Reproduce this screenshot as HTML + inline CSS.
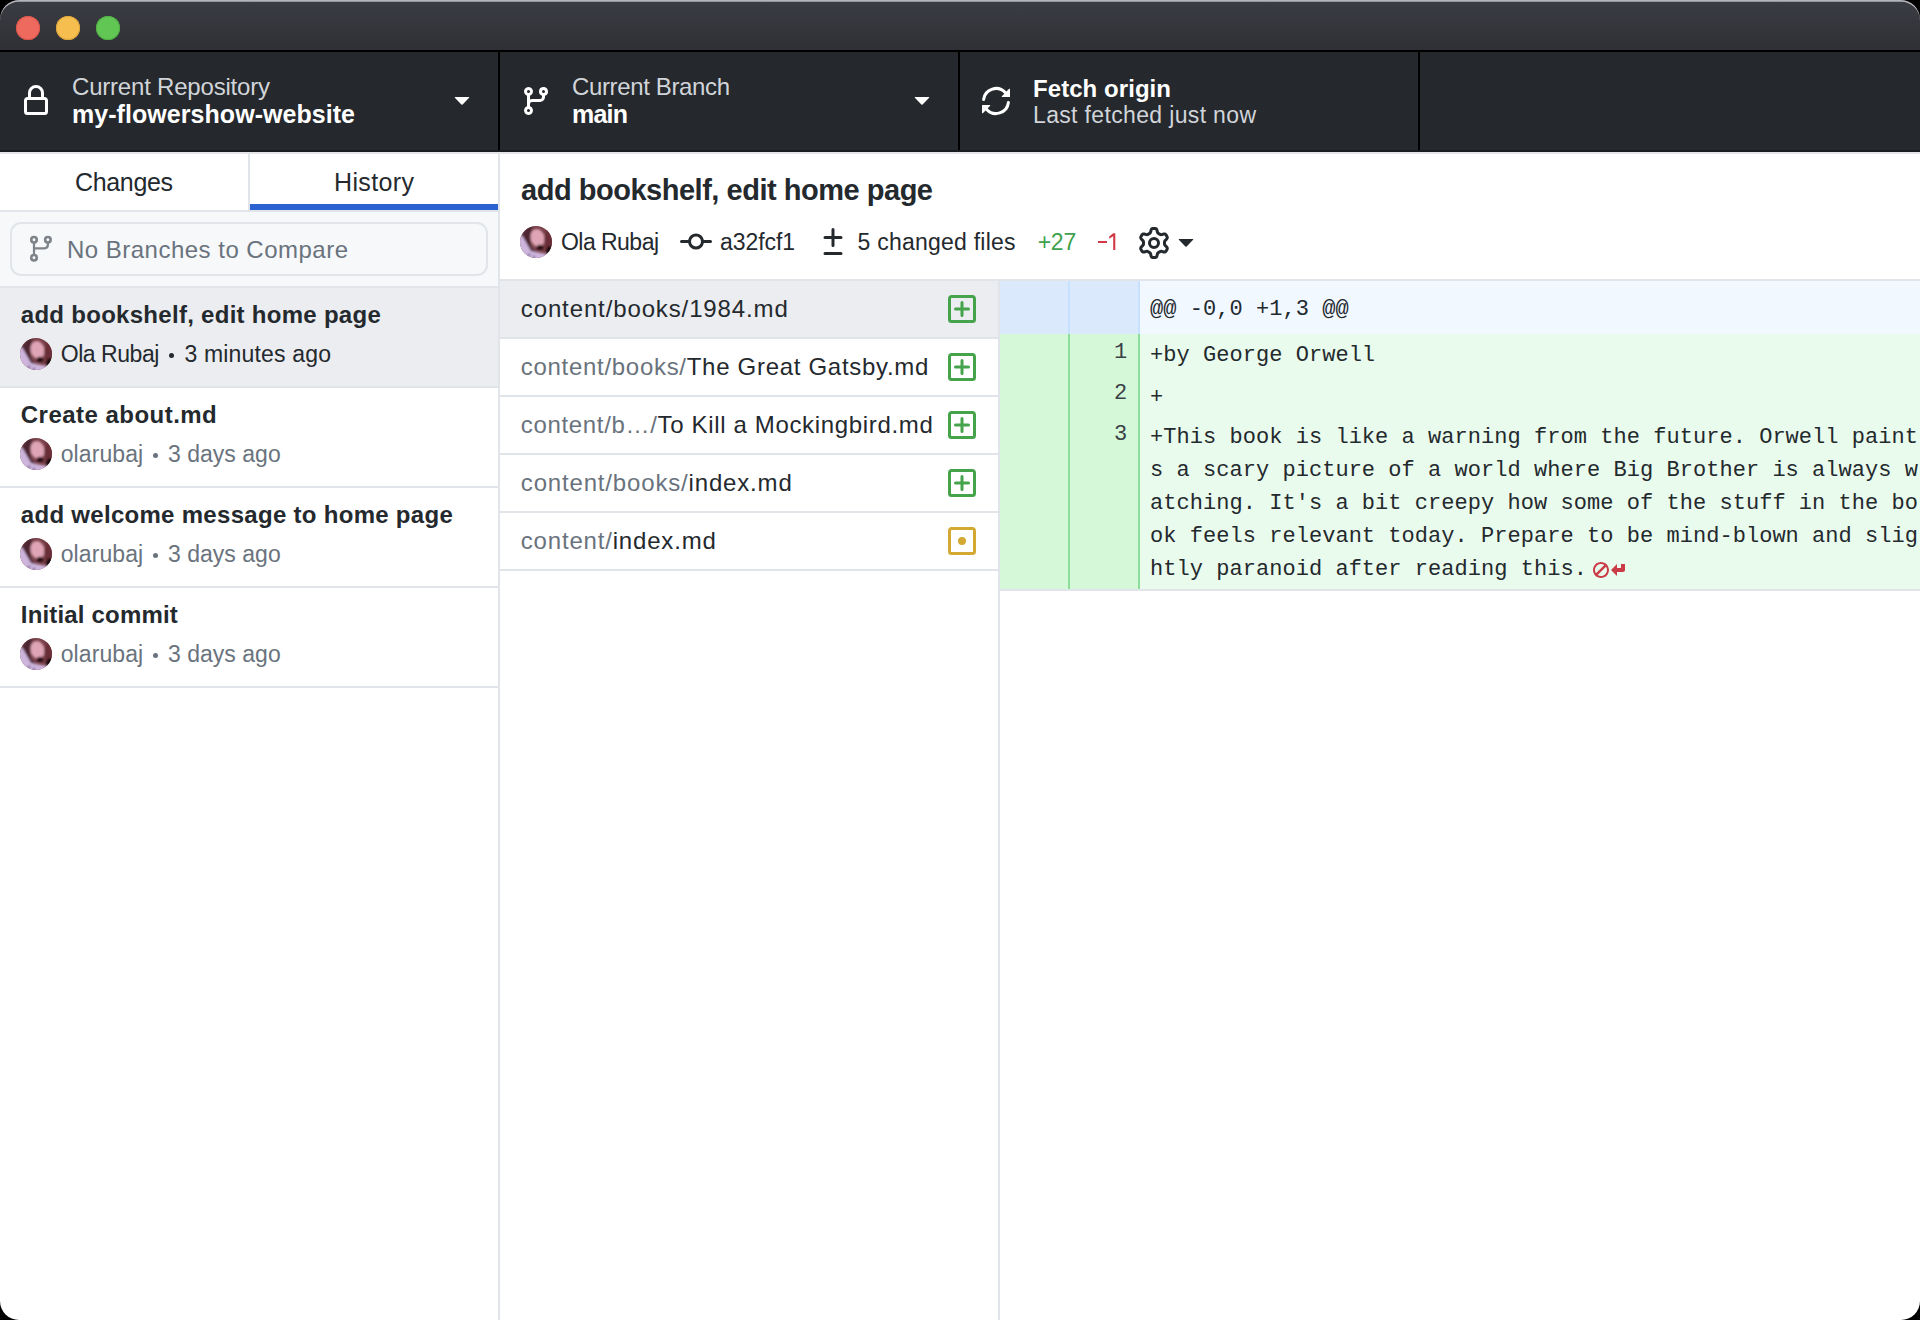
<!DOCTYPE html>
<html><head><meta charset="utf-8"><style>
html,body{margin:0;padding:0;width:1920px;height:1320px;overflow:hidden;background:#000;}
#win{position:absolute;left:0;top:0;width:1920px;height:1320px;border-radius:19px;overflow:hidden;}
.t{position:absolute;white-space:pre;line-height:1;font-family:"Liberation Sans",sans-serif;}
.m{position:absolute;white-space:pre;line-height:1;font-family:"Liberation Mono",monospace;letter-spacing:0.04px;}
.r{position:absolute;box-sizing:border-box;}
svg.r{overflow:visible;}
.av{position:absolute;border-radius:50%;background:
 radial-gradient(circle at 45% 40%, #e7b8c6 0, #cf8fa5 22%, rgba(160,80,100,0) 45%),
 radial-gradient(circle at 85% 75%, #1e0f12 0, #3b1c22 25%, rgba(60,28,34,0) 50%),
 radial-gradient(circle at 20% 85%, #d8c4e6 0, #c2a8d6 30%, rgba(194,168,214,0) 55%),
 radial-gradient(circle at 15% 25%, #5a2d38 0, rgba(90,45,56,0) 45%),
 #8e5565;}
</style></head><body>
<svg width="0" height="0" style="position:absolute"><defs>
<clipPath id="avc"><circle cx="16" cy="16" r="16"/></clipPath>
<filter id="avb" x="-20%" y="-20%" width="140%" height="140%"><feGaussianBlur stdDeviation="1"/></filter>
<symbol id="avsym" viewBox="0 0 32 32"><g clip-path="url(#avc)"><rect width="32" height="32" fill="#7a4048"/><g filter="url(#avb)">
<polygon points="-2,9 3,10 16,26 27,28 34,34 -2,34" fill="#cdb5dd"/>
<polygon points="2,9 7,1 13,1 11,10 11,20 16,26 11,25" fill="#4e2632"/>
<ellipse cx="17.5" cy="12" rx="7" ry="9" transform="rotate(-15 17.5 12)" fill="#dfa5b6"/>
<ellipse cx="28.5" cy="14" rx="4.5" ry="11" fill="#6b2f38"/>
<ellipse cx="20" cy="21.5" rx="3.5" ry="2.8" fill="#2a0e12"/>
<ellipse cx="30" cy="26" rx="4" ry="6" fill="#140808"/>
<circle cx="9" cy="29" r="1.3" fill="#5a4a80"/><circle cx="14" cy="31" r="1.2" fill="#5a4a80"/>
</g></g></symbol></defs></svg>
<div id="win">
<div class="r" style="left:0px;top:0px;width:1920px;height:50px;background:linear-gradient(#3b3d44,#2e3035);"></div>
<div class="r" style="left:0px;top:50px;width:1920px;height:2px;background:#000;"></div>
<div class="r" style="left:0;top:0;width:1920px;height:40px;border-radius:19px 19px 0 0;box-shadow:inset 0 1.8px 0 #b4b5ba;"></div>
<div class="r" style="left:16px;top:16px;width:24px;height:24px;border-radius:50%;background:#ee6a5f;box-shadow:inset 0 0 0 1px #d9544a;"></div>
<div class="r" style="left:56px;top:16px;width:24px;height:24px;border-radius:50%;background:#f5be4f;box-shadow:inset 0 0 0 1px #dba53a;"></div>
<div class="r" style="left:96px;top:16px;width:24px;height:24px;border-radius:50%;background:#62c655;box-shadow:inset 0 0 0 1px #52ad45;"></div>
<div class="r" style="left:0px;top:52px;width:1920px;height:98px;background:#25282c;"></div>
<div class="r" style="left:0px;top:150px;width:1920px;height:2px;background:#1a1c20;"></div>
<div class="r" style="left:0px;top:152px;width:1920px;height:2px;background:#e4e5e9;"></div>
<div class="r" style="left:498px;top:52px;width:2px;height:98px;background:#000;"></div>
<div class="r" style="left:958px;top:52px;width:2px;height:98px;background:#000;"></div>
<div class="r" style="left:1418px;top:52px;width:2px;height:98px;background:#000;"></div>
<div class="r" style="left:0px;top:154px;width:1920px;height:1166px;background:#fff;"></div>
<div class="r" style="left:248px;top:154px;width:2px;height:56px;background:#e1e4e8;"></div>
<div class="r" style="left:250px;top:204px;width:248px;height:6px;background:#2a63d1;"></div>
<div class="r" style="left:0px;top:210px;width:498px;height:2px;background:#e1e4e8;"></div>
<div class="r" style="left:0px;top:212px;width:498px;height:74px;background:#f6f8fa;"></div>
<div class="r" style="left:10px;top:222px;width:478px;height:54px;border:2px solid #e1e4e8;border-radius:11px;background:#f6f8fa;"></div>
<div class="r" style="left:0px;top:286px;width:498px;height:2px;background:#e1e4e8;"></div>
<div class="r" style="left:0px;top:288px;width:498px;height:98px;background:#ebedf0;"></div>
<div class="r" style="left:0px;top:386px;width:498px;height:2px;background:#e1e4e8;"></div>
<div class="r" style="left:0px;top:486px;width:498px;height:2px;background:#e1e4e8;"></div>
<div class="r" style="left:0px;top:586px;width:498px;height:2px;background:#e1e4e8;"></div>
<div class="r" style="left:0px;top:686px;width:498px;height:2px;background:#e1e4e8;"></div>
<div class="r" style="left:498px;top:154px;width:2px;height:1166px;background:#e1e4e8;"></div>
<div class="r" style="left:500px;top:279px;width:1420px;height:2px;background:#e1e4e8;"></div>
<div class="r" style="left:500px;top:281px;width:498px;height:56px;background:#ebedf0;"></div>
<div class="r" style="left:500px;top:337px;width:498px;height:2px;background:#e1e4e8;"></div>
<div class="r" style="left:500px;top:395px;width:498px;height:2px;background:#e1e4e8;"></div>
<div class="r" style="left:500px;top:453px;width:498px;height:2px;background:#e1e4e8;"></div>
<div class="r" style="left:500px;top:511px;width:498px;height:2px;background:#e1e4e8;"></div>
<div class="r" style="left:500px;top:569px;width:498px;height:2px;background:#e1e4e8;"></div>
<div class="r" style="left:998px;top:281px;width:2px;height:1039px;background:#e1e4e8;"></div>
<div class="r" style="left:1000px;top:281px;width:138px;height:53px;background:#dbe9fc;"></div>
<div class="r" style="left:1140px;top:281px;width:780px;height:53px;background:#f1f8ff;"></div>
<div class="r" style="left:1068px;top:281px;width:2px;height:53px;background:#c8e1ff;"></div>
<div class="r" style="left:1138px;top:281px;width:2px;height:53px;background:#c8e1ff;"></div>
<div class="r" style="left:1000px;top:334px;width:138px;height:255px;background:#d5f9d8;"></div>
<div class="r" style="left:1140px;top:334px;width:780px;height:255px;background:#e9fbec;"></div>
<div class="r" style="left:1068px;top:334px;width:2px;height:255px;background:#8fdd9c;"></div>
<div class="r" style="left:1138px;top:334px;width:2px;height:255px;background:#8fdd9c;"></div>
<div class="r" style="left:1000px;top:589px;width:920px;height:2px;background:#e1e4e8;"></div>
<svg class="r" style="left:20px;top:85px;" width="32" height="32" viewBox="0 0 16 16"><path fill="#fff" d="M4 4a4 4 0 0 1 8 0v2h.25c.966 0 1.75.784 1.75 1.75v5.5A1.75 1.75 0 0 1 12.25 15h-8.5A1.75 1.75 0 0 1 2 13.25v-5.5C2 6.784 2.784 6 3.75 6H4Zm8.25 3.5h-8.5a.25.25 0 0 0-.25.25v5.5c0 .138.112.25.25.25h8.5a.25.25 0 0 0 .25-.25v-5.5a.25.25 0 0 0-.25-.25ZM10.5 6V4a2.5 2.5 0 1 0-5 0v2Z"/></svg>
<svg class="r" style="left:446px;top:82.7px;" width="32" height="32" viewBox="0 0 16 16"><path fill="#fff" d="M4.427 7.427l3.396 3.396a.25.25 0 00.354 0l3.396-3.396A.25.25 0 0011.396 7H4.604a.25.25 0 00-.177.427z"/></svg>
<svg class="r" style="left:520px;top:85px;" width="32" height="32" viewBox="0 0 16 16"><path fill="#fff" d="M9.5 3.25a2.25 2.25 0 1 1 3 2.122V6A2.5 2.5 0 0 1 10 8.5H6a1 1 0 0 0-1 1v1.128a2.251 2.251 0 1 1-1.5 0V5.372a2.25 2.25 0 1 1 1.5 0v1.836A2.493 2.493 0 0 1 6 7h4a1 1 0 0 0 1-1v-.628A2.25 2.25 0 0 1 9.5 3.25Zm-6 0a.75.75 0 1 0 1.5 0 .75.75 0 0 0-1.5 0Zm8.25-.75a.75.75 0 1 0 0 1.5.75.75 0 0 0 0-1.5ZM4.25 12a.75.75 0 1 0 0 1.5.75.75 0 0 0 0-1.5Z"/></svg>
<svg class="r" style="left:906px;top:82.7px;" width="32" height="32" viewBox="0 0 16 16"><path fill="#fff" d="M4.427 7.427l3.396 3.396a.25.25 0 00.354 0l3.396-3.396A.25.25 0 0011.396 7H4.604a.25.25 0 00-.177.427z"/></svg>
<svg class="r" style="left:980px;top:85px;transform:scaleX(-1);" width="32" height="32" viewBox="0 0 16 16"><path fill="#fff" d="M1.705 8.005a.75.75 0 0 1 .834.656 5.5 5.5 0 0 0 9.592 2.97l-1.204-1.204a.25.25 0 0 1 .177-.427h3.646a.25.25 0 0 1 .25.25v3.646a.25.25 0 0 1-.427.177l-1.38-1.38A7.002 7.002 0 0 1 1.05 8.84a.75.75 0 0 1 .656-.834ZM8 2.5a5.487 5.487 0 0 0-4.131 1.869l1.204 1.204A.25.25 0 0 1 4.896 6H1.25A.25.25 0 0 1 1 5.75V2.104a.25.25 0 0 1 .427-.177l1.38 1.38A7.002 7.002 0 0 1 14.95 7.16a.75.75 0 0 1-1.49.178A5.5 5.5 0 0 0 8 2.5Z"/></svg>
<svg class="r" style="left:0;top:0" width="80" height="300" viewBox="0 0 80 300"><g fill="none" stroke="#7e8389" stroke-width="2.2"><g stroke-width="2.6"><circle cx="34" cy="239.8" r="2.75"/><circle cx="47.9" cy="239.8" r="2.75"/><circle cx="34" cy="257.7" r="2.75"/></g><path d="M34 242.8V254.7M47.9 242.8V244.8Q47.9 248.3 44.4 248.3H34"/></g></svg>
<svg class="r" style="left:680px;top:226px;" width="32" height="32" viewBox="0 0 16 16"><path fill="#24292e" d="M11.93 8.5a4.002 4.002 0 0 1-7.86 0H.75a.75.75 0 0 1 0-1.5h3.32a4.002 4.002 0 0 1 7.86 0h3.32a.75.75 0 0 1 0 1.5Zm-1.43-.75a2.5 2.5 0 1 0-5 0 2.5 2.5 0 0 0 5 0Z"/></svg>
<svg class="r" style="left:817px;top:226px;" width="32" height="32" viewBox="0 0 16 16"><path fill="#24292e" d="M8.75 1.75V5H12a.75.75 0 0 1 0 1.5H8.75v3.25a.75.75 0 0 1-1.5 0V6.5H4A.75.75 0 0 1 4 5h3.25V1.75a.75.75 0 0 1 1.5 0ZM4 13h8a.75.75 0 0 1 0 1.5H4A.75.75 0 0 1 4 13Z"/></svg>
<svg class="r" style="left:1138px;top:227px;" width="32" height="32" viewBox="0 0 16 16"><path fill="#24292e" d="M8 0a8.2 8.2 0 0 1 .701.031C9.444.095 9.99.645 10.16 1.29l.288 1.107c.018.066.079.158.212.224.231.114.454.243.668.386.123.082.233.09.299.071l1.103-.303c.644-.176 1.392.021 1.82.63.27.385.506.792.704 1.218.315.675.111 1.422-.364 1.891l-.814.806c-.049.048-.098.147-.088.294.016.257.016.515 0 .772-.01.147.038.246.088.294l.814.806c.475.469.679 1.216.364 1.891a7.977 7.977 0 0 1-.704 1.217c-.428.61-1.176.807-1.82.63l-1.102-.302c-.067-.019-.177-.011-.3.071a5.909 5.909 0 0 1-.668.386c-.133.066-.194.158-.211.224l-.29 1.106c-.168.646-.715 1.196-1.458 1.26a8.006 8.006 0 0 1-1.402 0c-.743-.064-1.289-.614-1.458-1.26l-.289-1.106c-.018-.066-.079-.158-.212-.224a5.738 5.738 0 0 1-.668-.386c-.123-.082-.233-.09-.299-.071l-1.103.303c-.644.176-1.392-.021-1.82-.63a8.12 8.12 0 0 1-.704-1.218c-.315-.675-.111-1.422.363-1.891l.815-.806c.05-.048.098-.147.088-.294a6.214 6.214 0 0 1 0-.772c.01-.147-.038-.246-.088-.294l-.815-.806C.635 6.045.431 5.298.746 4.623a7.92 7.92 0 0 1 .704-1.217c.428-.61 1.176-.807 1.82-.63l1.102.302c.067.019.177.011.3-.071.214-.143.437-.272.668-.386.133-.066.194-.158.211-.224l.29-1.106C6.009.645 6.556.095 7.299.03 7.53.01 7.764 0 8 0Zm-.571 1.525c-.036.003-.108.036-.137.146l-.289 1.105c-.147.561-.549.967-.998 1.189-.173.086-.34.183-.5.29-.417.278-.97.423-1.529.27l-1.103-.303c-.109-.03-.175.016-.195.045-.22.312-.412.644-.573.99-.014.031-.021.11.059.19l.815.806c.411.406.562.957.53 1.456a4.709 4.709 0 0 0 0 .582c.032.499-.119 1.05-.53 1.456l-.815.806c-.081.08-.073.159-.059.19.162.346.353.677.573.989.02.03.085.076.195.046l1.102-.303c.56-.153 1.113-.008 1.53.27.161.107.328.204.501.29.447.222.85.629.997 1.189l.289 1.105c.029.109.101.143.137.146a6.6 6.6 0 0 0 1.142 0c.036-.003.108-.036.137-.146l.289-1.105c.147-.561.549-.967.998-1.189.173-.086.34-.183.5-.29.417-.278.97-.423 1.529-.27l1.103.303c.109.029.175-.016.195-.045.22-.313.411-.644.573-.99.014-.031.021-.11-.059-.19l-.815-.806c-.411-.406-.562-.957-.53-1.456a4.709 4.709 0 0 0 0-.582c-.032-.499.119-1.05.53-1.456l.815-.806c.081-.08.073-.159.059-.19a6.464 6.464 0 0 0-.573-.989c-.02-.03-.085-.076-.195-.046l-1.102.303c-.56.153-1.113.008-1.53-.27a4.44 4.44 0 0 0-.501-.29c-.447-.222-.85-.629-.997-1.189l-.289-1.105c-.029-.11-.101-.143-.137-.146a6.6 6.6 0 0 0-1.142 0ZM11 8a3 3 0 1 1-6 0 3 3 0 0 1 6 0ZM9.5 8a1.5 1.5 0 1 0-3.001.001A1.5 1.5 0 0 0 9.5 8Z"/></svg>
<svg class="r" style="left:1170px;top:225px;" width="32" height="32" viewBox="0 0 16 16"><path fill="#24292e" d="M4.427 7.427l3.396 3.396a.25.25 0 00.354 0l3.396-3.396A.25.25 0 0011.396 7H4.604a.25.25 0 00-.177.427z"/></svg>
<svg class="r" style="left:946px;top:293px;" width="32" height="32" viewBox="0 0 16 16"><path fill="#45a44b" d="M2.75 1h10.5c.966 0 1.75.784 1.75 1.75v10.5A1.75 1.75 0 0 1 13.25 15H2.75A1.75 1.75 0 0 1 1 13.25V2.75C1 1.784 1.784 1 2.75 1Zm10.5 1.5H2.75a.25.25 0 0 0-.25.25v10.5c0 .138.112.25.25.25h10.5a.25.25 0 0 0 .25-.25V2.75a.25.25 0 0 0-.25-.25ZM8 4a.75.75 0 0 1 .75.75v2.5h2.5a.75.75 0 0 1 0 1.5h-2.5v2.5a.75.75 0 0 1-1.5 0v-2.5h-2.5a.75.75 0 0 1 0-1.5h2.5v-2.5A.75.75 0 0 1 8 4Z"/></svg>
<svg class="r" style="left:946px;top:351px;" width="32" height="32" viewBox="0 0 16 16"><path fill="#45a44b" d="M2.75 1h10.5c.966 0 1.75.784 1.75 1.75v10.5A1.75 1.75 0 0 1 13.25 15H2.75A1.75 1.75 0 0 1 1 13.25V2.75C1 1.784 1.784 1 2.75 1Zm10.5 1.5H2.75a.25.25 0 0 0-.25.25v10.5c0 .138.112.25.25.25h10.5a.25.25 0 0 0 .25-.25V2.75a.25.25 0 0 0-.25-.25ZM8 4a.75.75 0 0 1 .75.75v2.5h2.5a.75.75 0 0 1 0 1.5h-2.5v2.5a.75.75 0 0 1-1.5 0v-2.5h-2.5a.75.75 0 0 1 0-1.5h2.5v-2.5A.75.75 0 0 1 8 4Z"/></svg>
<svg class="r" style="left:946px;top:409px;" width="32" height="32" viewBox="0 0 16 16"><path fill="#45a44b" d="M2.75 1h10.5c.966 0 1.75.784 1.75 1.75v10.5A1.75 1.75 0 0 1 13.25 15H2.75A1.75 1.75 0 0 1 1 13.25V2.75C1 1.784 1.784 1 2.75 1Zm10.5 1.5H2.75a.25.25 0 0 0-.25.25v10.5c0 .138.112.25.25.25h10.5a.25.25 0 0 0 .25-.25V2.75a.25.25 0 0 0-.25-.25ZM8 4a.75.75 0 0 1 .75.75v2.5h2.5a.75.75 0 0 1 0 1.5h-2.5v2.5a.75.75 0 0 1-1.5 0v-2.5h-2.5a.75.75 0 0 1 0-1.5h2.5v-2.5A.75.75 0 0 1 8 4Z"/></svg>
<svg class="r" style="left:946px;top:467px;" width="32" height="32" viewBox="0 0 16 16"><path fill="#45a44b" d="M2.75 1h10.5c.966 0 1.75.784 1.75 1.75v10.5A1.75 1.75 0 0 1 13.25 15H2.75A1.75 1.75 0 0 1 1 13.25V2.75C1 1.784 1.784 1 2.75 1Zm10.5 1.5H2.75a.25.25 0 0 0-.25.25v10.5c0 .138.112.25.25.25h10.5a.25.25 0 0 0 .25-.25V2.75a.25.25 0 0 0-.25-.25ZM8 4a.75.75 0 0 1 .75.75v2.5h2.5a.75.75 0 0 1 0 1.5h-2.5v2.5a.75.75 0 0 1-1.5 0v-2.5h-2.5a.75.75 0 0 1 0-1.5h2.5v-2.5A.75.75 0 0 1 8 4Z"/></svg>
<svg class="r" style="left:946px;top:525px;" width="32" height="32" viewBox="0 0 16 16"><path fill="#d3a833" d="M13.25 1c.966 0 1.75.784 1.75 1.75v10.5A1.75 1.75 0 0 1 13.25 15H2.75A1.75 1.75 0 0 1 1 13.25V2.75C1 1.784 1.784 1 2.75 1ZM2.75 2.5a.25.25 0 0 0-.25.25v10.5c0 .138.112.25.25.25h10.5a.25.25 0 0 0 .25-.25V2.75a.25.25 0 0 0-.25-.25ZM8 10a2 2 0 1 1 0-4 2 2 0 0 1 0 4Z"/></svg>
<svg class="r" style="left:1593px;top:554px;" width="32" height="32" viewBox="0 0 16 16"><path fill="#cb3a47" d="M16 5v3c0 .55-.45 1-1 1h-3v2L9 8l3-3v2h2V5h2zM8 8c0 2.2-1.8 4-4 4s-4-1.8-4-4 1.8-4 4-4 4 1.8 4 4zM1.5 9.66L5.66 5.5C5.18 5.19 4.61 5 4 5 2.34 5 1 6.34 1 8c0 .61.19 1.17.5 1.66zM7 8c0-.61-.19-1.17-.5-1.66L2.34 10.5c.48.31 1.05.5 1.66.5 1.66 0 3-1.34 3-3z"/></svg>
<svg class="r" style="left:20.0px;top:338.0px;" width="32" height="32" viewBox="0 0 32 32"><use href="#avsym"/></svg>
<svg class="r" style="left:20.0px;top:438.0px;" width="32" height="32" viewBox="0 0 32 32"><use href="#avsym"/></svg>
<svg class="r" style="left:20.0px;top:538.0px;" width="32" height="32" viewBox="0 0 32 32"><use href="#avsym"/></svg>
<svg class="r" style="left:20.0px;top:638.0px;" width="32" height="32" viewBox="0 0 32 32"><use href="#avsym"/></svg>
<svg class="r" style="left:520.0px;top:226.0px;" width="32" height="32" viewBox="0 0 32 32"><use href="#avsym"/></svg>
<div class="t" style="left:72.00px;top:74.68px;font-size:24px;color:#d1d5da;letter-spacing:-0.201px;">Current Repository</div>
<div class="t" style="left:72.00px;top:101.83px;font-size:25px;color:#ffffff;font-weight:700;letter-spacing:0.051px;">my-flowershow-website</div>
<div class="t" style="left:572.00px;top:74.68px;font-size:24px;color:#d1d5da;letter-spacing:-0.365px;">Current Branch</div>
<div class="t" style="left:572.00px;top:101.83px;font-size:25px;color:#ffffff;font-weight:700;letter-spacing:-0.783px;">main</div>
<div class="t" style="left:1033.00px;top:76.88px;font-size:24px;color:#ffffff;font-weight:700;letter-spacing:0.060px;">Fetch origin</div>
<div class="t" style="left:1033.00px;top:103.53px;font-size:23px;color:#d1d5da;letter-spacing:0.346px;">Last fetched just now</div>
<div class="t" style="left:75.00px;top:169.83px;font-size:25px;color:#24292e;letter-spacing:-0.345px;">Changes</div>
<div class="t" style="left:334.00px;top:169.83px;font-size:25px;color:#24292e;letter-spacing:0.370px;">History</div>
<div class="t" style="left:67.00px;top:238.48px;font-size:24px;color:#6a737d;letter-spacing:0.485px;">No Branches to Compare</div>
<div class="t" style="left:20.80px;top:302.68px;font-size:24px;color:#24292e;font-weight:700;letter-spacing:0.283px;">add bookshelf, edit home page</div>
<div class="t" style="left:60.70px;top:342.53px;font-size:23px;color:#24292e;letter-spacing:-0.447px;">Ola Rubaj</div>
<div class="r" style="left:169.3px;top:353px;width:5px;height:5px;border-radius:50%;background:#24292e;"></div>
<div class="t" style="left:184.40px;top:342.53px;font-size:23px;color:#24292e;letter-spacing:0.176px;">3 minutes ago</div>
<div class="t" style="left:20.80px;top:402.68px;font-size:24px;color:#24292e;font-weight:700;letter-spacing:0.473px;">Create about.md</div>
<div class="t" style="left:60.70px;top:442.53px;font-size:23px;color:#6a737d;letter-spacing:0.094px;">olarubaj</div>
<div class="r" style="left:153px;top:453px;width:5px;height:5px;border-radius:50%;background:#6a737d;"></div>
<div class="t" style="left:168.00px;top:442.53px;font-size:23px;color:#6a737d;letter-spacing:0.018px;">3 days ago</div>
<div class="t" style="left:20.80px;top:502.68px;font-size:24px;color:#24292e;font-weight:700;letter-spacing:0.296px;">add welcome message to home page</div>
<div class="t" style="left:60.70px;top:542.53px;font-size:23px;color:#6a737d;letter-spacing:0.094px;">olarubaj</div>
<div class="r" style="left:153px;top:553px;width:5px;height:5px;border-radius:50%;background:#6a737d;"></div>
<div class="t" style="left:168.00px;top:542.53px;font-size:23px;color:#6a737d;letter-spacing:0.018px;">3 days ago</div>
<div class="t" style="left:20.80px;top:602.68px;font-size:24px;color:#24292e;font-weight:700;letter-spacing:0.177px;">Initial commit</div>
<div class="t" style="left:60.70px;top:642.53px;font-size:23px;color:#6a737d;letter-spacing:0.094px;">olarubaj</div>
<div class="r" style="left:153px;top:653px;width:5px;height:5px;border-radius:50%;background:#6a737d;"></div>
<div class="t" style="left:168.00px;top:642.53px;font-size:23px;color:#6a737d;letter-spacing:0.018px;">3 days ago</div>
<div class="t" style="left:521.00px;top:176.45px;font-size:29px;color:#24292e;font-weight:700;letter-spacing:-0.478px;">add bookshelf, edit home page</div>
<div class="t" style="left:561.00px;top:230.53px;font-size:23px;color:#24292e;letter-spacing:-0.535px;">Ola Rubaj</div>
<div class="t" style="left:720.00px;top:230.53px;font-size:23px;color:#24292e;letter-spacing:-0.075px;">a32fcf1</div>
<div class="t" style="left:857.50px;top:230.53px;font-size:23px;color:#24292e;letter-spacing:0.234px;">5 changed files</div>
<div class="t" style="left:1037.70px;top:230.53px;font-size:23px;color:#3fa24d;letter-spacing:-0.258px;">+27</div>
<div class="r" style="left:1098px;top:241.3px;width:8.5px;height:2px;background:#cf3a45;"></div>
<svg class="r" style="left:0;top:0" width="1200" height="260"><path fill="#cf3a45" d="M1113.2 233.2H1115.3V250H1113.2V236.2L1109.2 238.7V236.4Z"/></svg>
<div class="t" style="left:520.80px;top:297.48px;font-size:24px;color:#24292e;letter-spacing:0.874px;">content/books/1984.md</div>
<div class="t" style="left:520.80px;top:355.48px;font-size:24px;color:#24292e;letter-spacing:0.703px;"><span style="color:#6a737d">content/books/</span>The Great Gatsby.md</div>
<div class="t" style="left:520.80px;top:413.48px;font-size:24px;color:#24292e;letter-spacing:0.661px;"><span style="color:#6a737d">content/b…/</span>To Kill a Mockingbird.md</div>
<div class="t" style="left:520.80px;top:471.48px;font-size:24px;color:#24292e;letter-spacing:0.833px;"><span style="color:#6a737d">content/books/</span>index.md</div>
<div class="t" style="left:520.80px;top:529.48px;font-size:24px;color:#24292e;letter-spacing:0.814px;"><span style="color:#6a737d">content/</span>index.md</div>
<div class="m" style="left:1150px;top:299.15px;font-size:22px;color:#24292e;">@@ -0,0 +1,3 @@</div>
<div class="m" style="left:1114px;top:341.65px;font-size:22px;color:#3b4148;width:13.2px;text-align:right;">1</div>
<div class="m" style="left:1114px;top:382.65px;font-size:22px;color:#3b4148;width:13.2px;text-align:right;">2</div>
<div class="m" style="left:1114px;top:423.65px;font-size:22px;color:#3b4148;width:13.2px;text-align:right;">3</div>
<div class="m" style="left:1150px;top:344.85px;font-size:22px;color:#24292e;">+by George Orwell</div>
<div class="m" style="left:1150px;top:386.55px;font-size:22px;color:#24292e;">+</div>
<div class="m" style="left:1150px;top:426.75px;font-size:22px;color:#24292e;">+This book is like a warning from the future. Orwell paint</div>
<div class="m" style="left:1150px;top:459.65px;font-size:22px;color:#24292e;">s a scary picture of a world where Big Brother is always w</div>
<div class="m" style="left:1150px;top:492.65px;font-size:22px;color:#24292e;">atching. It's a bit creepy how some of the stuff in the bo</div>
<div class="m" style="left:1150px;top:525.75px;font-size:22px;color:#24292e;">ok feels relevant today. Prepare to be mind-blown and slig</div>
<div class="m" style="left:1150px;top:558.75px;font-size:22px;color:#24292e;">htly paranoid after reading this.</div>
</div></body></html>
